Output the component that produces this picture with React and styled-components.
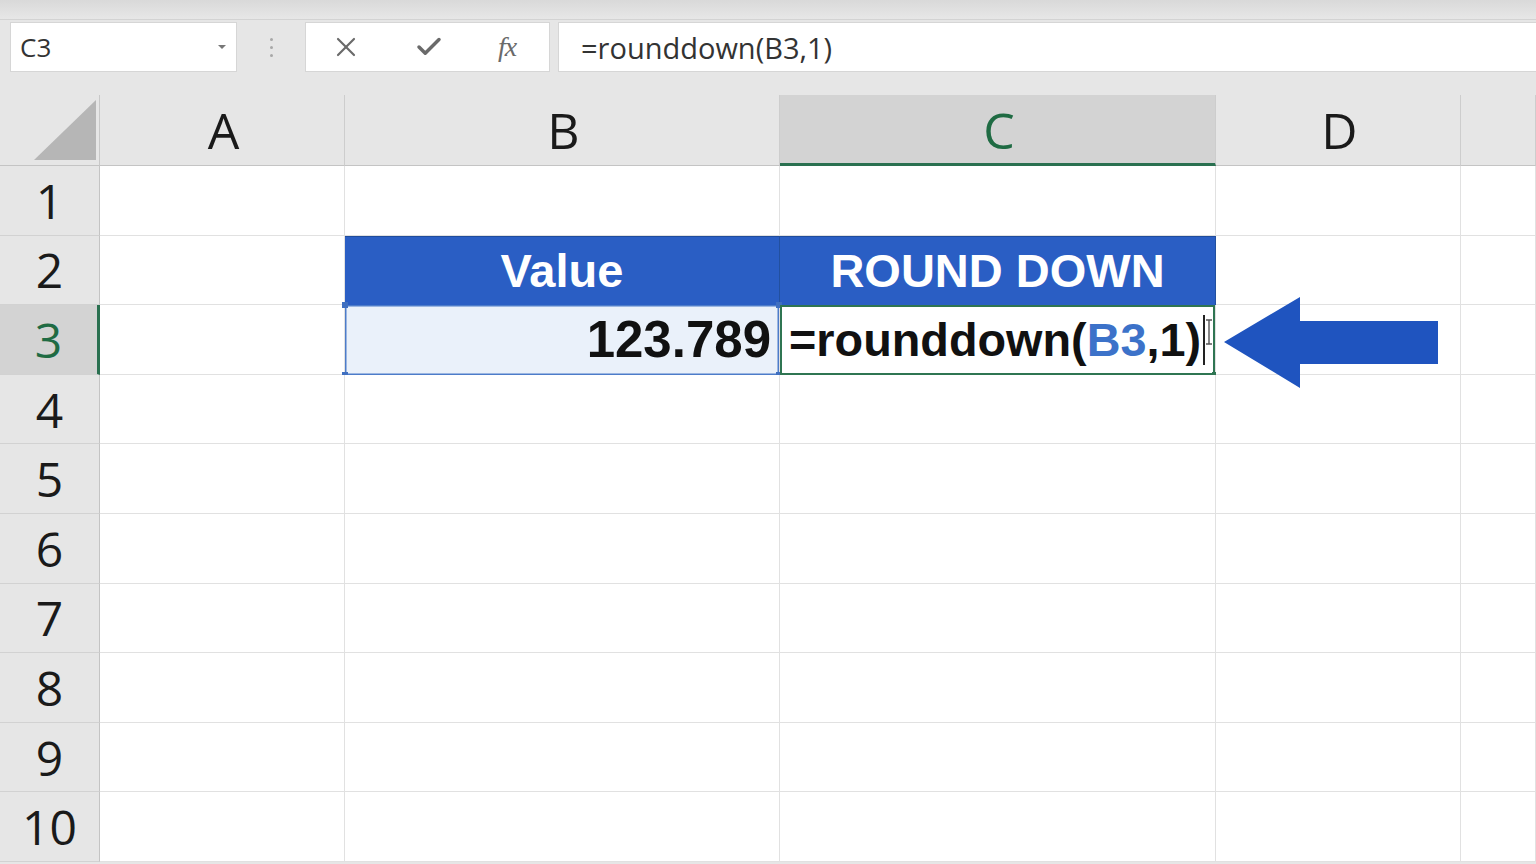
import React from "react";
import styled, { createGlobalStyle } from "styled-components";
import { X, Check } from "lucide-react";

const GlobalStyle = createGlobalStyle`
  * { box-sizing: border-box; }
  html, body { margin: 0; padding: 0; }
  body {
    font-family: "Open Sans", "Noto Sans", sans-serif;
    background: #e6e6e6;
  }
`;

const Page = styled.div`
  display: flex;
  flex-direction: column;
  height: 100vh;
  overflow: hidden;
  background: #e6e6e6;
`;

const TopStrip = styled.div`
  height: 20px;
  background: linear-gradient(#d9d9d9, #e7e7e7);
  border-bottom: 1px solid #d3d3d3;
`;

const FormulaRow = styled.div`
  display: flex;
  height: 50px;
  margin-top: 2px;
  padding-left: 10px;
`;

const Box = styled.div`
  background: #fff;
  border: 1px solid #d6d6d6;
  display: flex;
  align-items: center;
`;

const NameBox = styled(Box)`
  width: 227px;
  padding: 0 10px 0 9px;
  justify-content: space-between;
  font-size: 26px;
  color: #333;
`;

const Caret = styled.span`
  width: 0;
  height: 0;
  border-left: 4px solid transparent;
  border-right: 4px solid transparent;
  border-top: 4px solid #777;
`;

const Dots = styled.div`
  width: 68px;
  display: flex;
  flex-direction: column;
  align-items: center;
  justify-content: center;
  gap: 5px;

  span {
    width: 3px;
    height: 3px;
    border-radius: 50%;
    background: #a8a8a8;
  }
`;

const ButtonBox = styled(Box)`
  width: 245px;
  padding-left: 24px;
  gap: 52px;
  color: #666;
`;

const Fx = styled.span`
  font-family: "Liberation Serif", "DejaVu Serif", serif;
  font-style: italic;
  font-size: 28px;
  color: #6a6a6a;
  letter-spacing: -1px;
  margin-left: 2px;
`;

const FormulaInput = styled(Box)`
  flex: 1;
  margin-left: 8px;
  border-right: none;
  padding-left: 22px;
  font-size: 29px;
  color: #333;
`;

const Spacer = styled.div`
  height: 23px;
`;

const Sheet = styled.div`
  display: grid;
  grid-template-columns: 100px 245px 435px 436px 245px 1fr;
  grid-template-rows: 71px repeat(10, 69.6px);
`;

const Corner = styled.div`
  background: #e6e6e6;
  border-right: 1px solid #c8c8c8;
  border-bottom: 1px solid #c4c4c4;
  display: flex;
  align-items: flex-end;
  justify-content: flex-end;
  padding: 0 3px 5px 0;
`;

const ColHeader = styled.div`
  display: flex;
  align-items: center;
  justify-content: center;
  font-size: 50px;
  color: ${(p) => (p.$active ? "#1f6b43" : "#1a1a1a")};
  background: ${(p) => (p.$active ? "#d3d3d3" : "#e6e6e6")};
  border-right: 1px solid #cdcdcd;
  border-bottom: ${(p) => (p.$active ? "3px solid #2a7050" : "1px solid #c4c4c4")};
  padding-top: ${(p) => (p.$active ? "2px" : "0")};
  padding-left: 3px;
`;

const RowHeader = styled.div`
  display: flex;
  align-items: center;
  justify-content: center;
  font-size: 48px;
  color: ${(p) => (p.$active ? "#1f6b43" : "#1a1a1a")};
  background: ${(p) => (p.$active ? "#d3d3d3" : "#e6e6e6")};
  border-right: ${(p) => (p.$active ? "3px solid #2a7050" : "1px solid #c4c4c4")};
  border-bottom: 1px solid #d2d2d2;
`;

const kinds = {
  plain: `
    background: #fff;
  `,
  head: `
    background: #2a5ec4;
    color: #fff;
    justify-content: center;
    font-size: 47px;
    border-right: 1px solid #22509f;
    border-top: 1px solid #1f4c9c;
    border-bottom: none;
  `,
  num: `
    background: #eaf1fa;
    justify-content: flex-end;
    padding-right: 8px;
    font-size: 51px;
    box-shadow: inset 0 0 0 1.5px #4d7cc9;
    border-bottom: none;
  `,
  formula: `
    background: #fff;
    justify-content: flex-start;
    padding-left: 9px;
    font-size: 46.8px;
    box-shadow: inset 0 0 0 2px #2f7552;
    border-bottom: none;
  `,
};

const Cell = styled.div`
  position: relative;
  display: flex;
  align-items: center;
  font-family: "Liberation Sans", Arial, sans-serif;
  font-weight: 700;
  color: #111;
  border-right: 1px solid #e1e1e1;
  border-bottom: 1px solid #e1e1e1;
  white-space: nowrap;
  ${(p) => kinds[p.$kind || "plain"]}
`;

const Ref = styled.span`
  color: #3c72c9;
`;

const TextCaret = styled.span`
  display: inline-block;
  width: 2px;
  height: 50px;
  background: #222;
  margin-left: 2px;
  vertical-align: middle;
`;

const Handle = styled.span`
  position: absolute;
  width: 6px;
  height: 6px;
  background: ${(p) => p.$color};
  ${(p) => p.$pos}
`;

const IBeam = styled.svg`
  position: absolute;
  right: 1px;
  top: 14px;
`;

const Arrow = styled.svg`
  position: absolute;
  left: 8px;
  top: -8px;
  overflow: visible;
  z-index: 2;
`;

const columns = ["A", "B", "C", "D", "E"];

function CellContent({ row, col }) {
  if (row === 2 && col === "B") return <Cell $kind="head">Value</Cell>;
  if (row === 2 && col === "C") return <Cell $kind="head">ROUND DOWN</Cell>;
  if (row === 3 && col === "B")
    return (
      <Cell $kind="num">
        123.789
        <Handle $color="#3f6fc0" $pos="left: -3px; top: -3px;" />
        <Handle $color="#3f6fc0" $pos="right: -3px; top: -3px;" />
        <Handle $color="#3f6fc0" $pos="left: -3px; bottom: -3px;" />
        <Handle $color="#3f6fc0" $pos="right: -3px; bottom: -3px;" />
      </Cell>
    );
  if (row === 3 && col === "C")
    return (
      <Cell $kind="formula">
        <span>
          =rounddown(<Ref>B3</Ref>,1)
        </span>
        <TextCaret />
        <IBeam width="10" height="26" viewBox="0 0 10 26">
          <path d="M2 1h6M5 1v24M2 25h6" stroke="#555" strokeWidth="1.4" fill="none" />
        </IBeam>
        <Handle $color="#2f7552" $pos="right: -3px; bottom: -3px;" />
      </Cell>
    );
  if (row === 3 && col === "D")
    return (
      <Cell>
        <Arrow width="214" height="91" viewBox="0 0 214 91">
          <polygon points="0,45 76,0 76,24 214,24 214,67 76,67 76,91" fill="#1f54bf" />
        </Arrow>
      </Cell>
    );
  return <Cell />;
}

export default function App() {
  const rows = Array.from({ length: 10 }, (_, i) => i + 1);

  return (
    <Page>
      <GlobalStyle />
      <TopStrip />
      <FormulaRow>
        <NameBox>
          <span>C3</span>
          <Caret />
        </NameBox>
        <Dots>
          <span />
          <span />
          <span />
        </Dots>
        <ButtonBox>
          <X size={32} strokeWidth={1.6} color="#6a6a6a" />
          <Check size={30} strokeWidth={2.8} color="#6a6a6a" />
          <Fx>fx</Fx>
        </ButtonBox>
        <FormulaInput>=rounddown(B3,1)</FormulaInput>
      </FormulaRow>
      <Spacer />
      <Sheet>
        <Corner>
          <svg width="62" height="60" viewBox="0 0 62 60">
            <polygon points="0,60 62,0 62,60" fill="#b6b6b6" />
          </svg>
        </Corner>
        {columns.map((c) => (
          <ColHeader key={c} $active={c === "C"}>
            {c === "E" ? "" : c}
          </ColHeader>
        ))}
        {rows.map((r) => (
          <React.Fragment key={r}>
            <RowHeader $active={r === 3}>{r}</RowHeader>
            {columns.map((c) => (
              <CellContent key={c} row={r} col={c} />
            ))}
          </React.Fragment>
        ))}
      </Sheet>
    </Page>
  );
}
